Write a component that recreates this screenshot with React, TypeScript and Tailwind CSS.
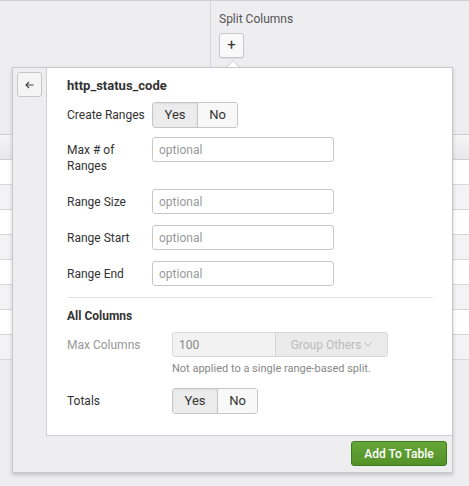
import React from "react";

const font = { fontFamily: "Roboto, 'Liberation Sans', sans-serif" };

const rows = [0, 1, 2, 3, 4, 5, 6, 7];

const YesNo = ({ width = "w-[86px]" }: { width?: string }) => (
  <div
    className={`flex h-[26px] ${width} rounded-[3px] border border-[#c6c6c6] overflow-hidden text-[13px] text-[#333]`}
  >
    <div className="w-[45px] flex items-center justify-center bg-[#ececec] border-r border-[#c6c6c6] shadow-[inset_0_1px_2px_rgba(0,0,0,0.08)]">
      Yes
    </div>
    <div className="flex-1 flex items-center justify-center bg-[#f8f8f8]">No</div>
  </div>
);

const TextRow = ({ label, top }: { label: React.ReactNode; top: string }) => (
  <div className={`flex items-start ${top}`}>
    <div className="w-[85px] pt-[5px] text-[12px] leading-[16px] text-[#333]">{label}</div>
    <div className="w-[182px] h-[25px] rounded-[3px] border border-[#c8c8c8] bg-white flex items-center px-[6px] text-[12px] text-[#999]">
      optional
    </div>
  </div>
);

export default function App() {
  return (
    <div
      style={font}
      className="relative w-[469px] h-[486px] overflow-hidden bg-[#eeedf0] border-t border-[#d0d0d0]"
    >
      {/* top area */}
      <div className="flex h-[133px]">
        <div className="w-[211px] border-r border-[#d6d6d8]" />
        <div className="pl-[8px] pt-[10px]">
          <div className="text-[12px] leading-[16px] text-[#555]">Split Columns</div>
          <div className="mt-[6px] w-[25px] h-[25px] rounded-[3px] border border-[#c8c8c8] bg-[#f9f9f9] shadow-[0_1px_1px_rgba(0,0,0,0.08)] flex items-center justify-center text-[15px] leading-none text-[#333]">
            +
          </div>
        </div>
      </div>

      {/* table behind */}
      <div className="border-t border-[#d0d0d0]">
        <div className="h-[25px] bg-gradient-to-b from-[#f5f5f6] to-[#e8e8ea] border-b border-[#d0d0d0]" />
        {rows.map((i) => (
          <div
            key={i}
            className={`h-[25px] border-b border-[#d8d8d8] ${i % 2 === 0 ? "bg-white" : "bg-[#f3f2f4]"}`}
          />
        ))}
      </div>

      {/* popover caret */}
      <svg className="absolute left-[225px] top-[59px]" width="16" height="9" viewBox="0 0 16 9">
        <path d="M0 8.5 L8 0.5 L16 8.5" fill="#ffffff" stroke="#c8c8c8" strokeWidth="1" />
        <rect x="1" y="8" width="14" height="1" fill="#ffffff" />
      </svg>

      {/* popover */}
      <div className="absolute left-[12px] top-[66px] w-[441px] h-[406px] bg-[#eeedf0] border border-[#c8c8c8] shadow-[0_2px_4px_rgba(0,0,0,0.18)] flex flex-col">
        <div className="flex">
          <div className="w-[33px] pt-[4px] pl-[4px]">
            <div className="w-[25px] h-[25px] rounded-[3px] border border-[#c8c8c8] bg-[#f5f5f5] flex items-center justify-center">
              <svg width="9" height="8" viewBox="0 0 9 8" fill="none" stroke="#444" strokeWidth="1.1">
                <path d="M8.5 4 H1 M4 1 L1 4 L4 7" />
              </svg>
            </div>
          </div>
          <div className="flex-1 h-[368px] bg-white border-l border-b border-[#cfcfcf] pl-[20px] pr-[19px]">
            <div className="pt-[10px] text-[13px] leading-[16px] font-bold text-[#333]">http_status_code</div>

            <div className="flex items-center mt-[8px]">
              <div className="w-[85px] text-[12px] text-[#333]">Create Ranges</div>
              <YesNo />
            </div>

            <TextRow
              top="mt-[9px]"
              label={
                <>
                  Max # of
                  <br />
                  Ranges
                </>
              }
            />
            <TextRow top="mt-[15px]" label="Range Size" />
            <TextRow top="mt-[11px]" label="Range Start" />
            <TextRow top="mt-[11px]" label="Range End" />

            <div className="mt-[11px] border-t border-[#e4e4e4]" />

            <div className="mt-[10px] text-[12px] leading-[16px] font-bold text-[#333]">All Columns</div>

            <div className="flex items-center mt-[8px]">
              <div className="w-[105px] text-[12px] text-[#999]">Max Columns</div>
              <div className="flex h-[25px] w-[216px] rounded-[3px] border border-[#d6d6d6] overflow-hidden text-[12px]">
                <div className="w-[103px] bg-[#f2f2f2] border-r border-[#d6d6d6] flex items-center px-[6px] text-[#888]">
                  100
                </div>
                <div className="flex-1 bg-[#ebebeb] flex items-center justify-center gap-[3px] text-[#bbb]">
                  Group Others
                  <svg width="8" height="5" viewBox="0 0 8 5" fill="none" stroke="#bbb" strokeWidth="1">
                    <path d="M0.5 0.5 L4 4 L7.5 0.5" />
                  </svg>
                </div>
              </div>
            </div>
            <div className="ml-[105px] mt-[5px] text-[11px] leading-[14px] text-[#888]">
              Not applied to a single range-based split.
            </div>

            <div className="flex items-center mt-[12px]">
              <div className="w-[105px] text-[12px] text-[#333]">Totals</div>
              <YesNo />
            </div>
          </div>
        </div>
        <div className="flex justify-end pt-[5px] pr-[5px]">
          <div className="w-[96px] h-[25px] rounded-[3px] border border-[#3d7a1c] bg-gradient-to-b from-[#65a637] to-[#559129] flex items-center justify-center text-[12px] font-medium text-white">
            Add To Table
          </div>
        </div>
      </div>
    </div>
  );
}
